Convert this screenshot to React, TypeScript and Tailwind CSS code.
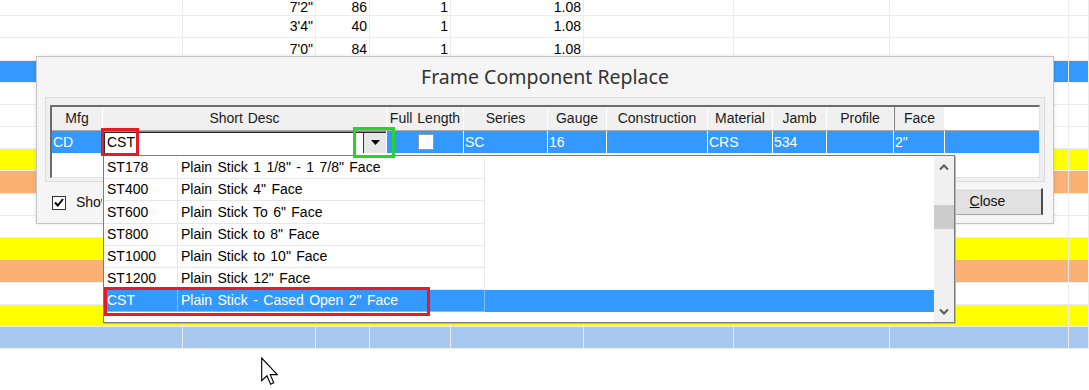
const sheetCols = ['w-[183px]', 'w-[133px]', 'w-[54px]', 'w-[81px]', 'w-[133px]', 'w-[150px]', 'w-[156px]', 'w-[179px]', 'w-[20px]'];

const rowBg: Record<string, string> = {
  white: 'bg-white',
  blue: 'bg-[#3399ff]',
  yellow: 'bg-[#ffff00]',
  orange: 'bg-[#fbb173]',
  light: 'bg-[#a8c9ef]',
};

const sheetRows = [
  { h: 'h-[22px]', bg: 'white', vals: ["3'4\"", '40', '1', '1.08'] },
  { h: 'h-[23px]', bg: 'white', vals: ["7'0\"", '84', '1', '1.08'] },
  { h: 'h-[22px]', bg: 'blue' },
  { h: 'h-[22px]', bg: 'white' },
  { h: 'h-[22px]', bg: 'white' },
  { h: 'h-[22px]', bg: 'white' },
  { h: 'h-[22px]', bg: 'yellow' },
  { h: 'h-[23px]', bg: 'orange' },
  { h: 'h-[22px]', bg: 'white' },
  { h: 'h-[22px]', bg: 'white' },
  { h: 'h-[22px]', bg: 'yellow' },
  { h: 'h-[23px]', bg: 'orange' },
  { h: 'h-[22px]', bg: 'white' },
  { h: 'h-[22px]', bg: 'yellow' },
  { h: 'h-[22px]', bg: 'light' },
];

const topVals = ['', "7'2\"", '86', '1', '1.08'];

const gridCols = [
  { label: 'Mfg', w: 'w-[51px]', val: 'CD' },
  { label: 'Short Desc', w: 'w-[284px]', val: '' },
  { label: 'Full Length', w: 'w-[77px]', val: '' },
  { label: 'Series', w: 'w-[84px]', val: 'SC' },
  { label: 'Gauge', w: 'w-[59px]', val: '16' },
  { label: 'Construction', w: 'w-[101px]', val: '' },
  { label: 'Material', w: 'w-[65px]', val: 'CRS' },
  { label: 'Jamb', w: 'w-[54px]', val: '534' },
  { label: 'Profile', w: 'w-[67px]', val: '' },
  { label: 'Face', w: 'w-[51px]', val: '2"' },
];

const items = [
  { code: 'ST178', desc: 'Plain Stick 1 1/8" - 1 7/8" Face', h: 'h-[22px]' },
  { code: 'ST400', desc: 'Plain Stick 4" Face', h: 'h-[22px]' },
  { code: 'ST600', desc: 'Plain Stick To 6" Face', h: 'h-[23px]' },
  { code: 'ST800', desc: 'Plain Stick to 8" Face', h: 'h-[22px]' },
  { code: 'ST1000', desc: 'Plain Stick to 10" Face', h: 'h-[22px]' },
  { code: 'ST1200', desc: 'Plain Stick 12" Face', h: 'h-[22px]' },
  { code: 'CST', desc: 'Plain Stick - Cased Open 2" Face', h: 'h-[22px]', selected: true },
];

function Chevron({ down }: { down?: boolean }) {
  return (
    <svg width="10" height="7" viewBox="0 0 10 7">
      <polyline points={down ? '1,1.5 5,5.5 9,1.5' : '1,5.5 5,1.5 9,5.5'} fill="none" stroke="#5a5a5a" strokeWidth="2" />
    </svg>
  );
}

function Sheet() {
  return (
    <div className="text-[14px] text-black">
      {/* first row is cut off by the top of the window */}
      <div className="flex h-[16px] border-b border-[#ececec] leading-[14px]">
        {sheetCols.map((w, i) => (
          <div key={i} className={`${w} shrink-0 border-r border-[#ececec] pr-[2px] text-right`}>
            {topVals[i] ?? ''}
          </div>
        ))}
      </div>
      {sheetRows.map((r, ri) => (
        <div key={ri} className={`flex ${r.h} border-b border-[#ececec] ${rowBg[r.bg]}`}>
          {sheetCols.map((w, i) => (
            <div key={i} className={`${w} flex shrink-0 items-center justify-end border-r border-[#ececec] pr-[2px]`}>
              {r.vals && i > 0 && i < 5 ? r.vals[i - 1] : ''}
            </div>
          ))}
        </div>
      ))}
    </div>
  );
}

function Dialog() {
  return (
    <div className="absolute left-[36px] top-[56px] flex h-[168px] w-[1018px] flex-col border border-[#c4c4c4] bg-[#f5f5f5] shadow-[0_0_4px_rgba(0,0,0,0.12)]">
      <div className="flex h-[40px] items-center justify-center font-['Noto_Sans',sans-serif] text-[19.5px] text-[#333]">
        Frame Component Replace
      </div>
      <div className="mx-[8px] border border-[#dcdcdc] bg-[#f0f0f0] pb-[3px] pl-[4px] pr-[4px] pt-[7px]">
        <div className="flex h-[73px] flex-col border-l-2 border-t-2 border-b border-r border-l-[#6b6b6b] border-t-[#6b6b6b] border-b-[#e2e2e2] border-r-[#e2e2e2] bg-white text-[14px]">
          <div className="flex h-[24px] shrink-0 border-b border-[#a9a9a9] [word-spacing:1px]">
            {gridCols.map((c) => (
              <div
                key={c.label}
                className={`${c.w} flex shrink-0 items-center justify-center border-r border-white bg-[#f0f0f0] text-[#1a1a1a] ${c.label === 'Face' ? 'border-l border-l-[#7a7a7a]' : ''}`}
              >
                {c.label}
              </div>
            ))}
          </div>
          <div className="flex h-[22px] shrink-0 bg-[#3399ff] text-white">
            {gridCols.map((c) => (
              <div key={c.label} className={`${c.w} flex shrink-0 items-center border-r border-white pl-[1px]`}>
                {c.label === 'Short Desc' ? (
                  <div className="flex h-[21px] w-full border-l border-t border-[#2a2a2a] bg-white text-black">
                    <div className="flex flex-1 items-center pl-[2px]">CST</div>
                    <div className="flex w-[23px] items-center justify-center border-l border-[#3a3a3a] bg-[#e6e6e6]">
                      <svg width="9" height="5" viewBox="0 0 9 5">
                        <polygon points="0,0 9,0 4.5,5" fill="#000" />
                      </svg>
                    </div>
                  </div>
                ) : c.label === 'Full Length' ? (
                  <div className="mx-auto h-[16px] w-[16px] border border-[#9a9a9a] bg-white" />
                ) : (
                  c.val
                )}
              </div>
            ))}
            <div className="flex-1" />
          </div>
          <div className="flex-1" />
        </div>
      </div>
      <div className="flex flex-1 items-start justify-between pl-[15px] pr-[10px] text-[14px]">
        <div className="mt-[10px] flex items-center gap-[10px]">
          <div className="flex h-[14px] w-[14px] items-center justify-center border border-[#333] bg-white">
            <svg width="10" height="9" viewBox="0 0 10 9">
              <polyline points="1,4.5 3.8,7.5 9,1" fill="none" stroke="#000" strokeWidth="2" />
            </svg>
          </div>
          {/* the rest of the label sits under the open list */}
          <span className="w-[26px] overflow-hidden whitespace-nowrap text-[#111]">Show</span>
        </div>
        <button className="mt-[6px] flex h-[27px] w-[110px] items-center justify-center border-b border-l border-r-2 border-t border-b-[#a6a6a6] border-l-white border-r-[#4d4d4d] border-t-white bg-[#e1e1e1] text-[#111]">
          <span className="underline">C</span>lose
        </button>
      </div>
    </div>
  );
}

function DropList() {
  return (
    <div className="absolute left-[103px] top-[155px] flex h-[168px] w-[852px] border border-[#7d7d7d] bg-white text-[14px] shadow-[1px_1px_0_#b5b5b5]">
      <div className="flex flex-1 flex-col pt-[1px]">
        {items.map((it) => (
          <div key={it.code} className={`flex ${it.h} ${it.selected ? 'bg-[#3399ff] text-white' : 'text-black'}`}>
            <div className={`flex w-[74px] shrink-0 items-center border-b border-r pl-[3px] ${it.selected ? 'border-[#7fbfff]' : 'border-[#e8e8e8]'}`}>
              {it.code}
            </div>
            <div className={`flex w-[307px] shrink-0 items-center border-b border-r pl-[3px] [word-spacing:1.5px] ${it.selected ? 'border-[#7fbfff]' : 'border-[#e8e8e8]'}`}>
              {it.desc}
            </div>
            <div className="flex-1" />
          </div>
        ))}
      </div>
      <div className="flex w-[20px] flex-col bg-[#f0f0f0]">
        <div className="flex h-[22px] items-center justify-center">
          <Chevron />
        </div>
        <div className="mt-[27px] h-[24px] bg-[#cdcdcd]" />
        <div className="flex-1" />
        <div className="flex h-[22px] items-center justify-center">
          <Chevron down />
        </div>
      </div>
    </div>
  );
}

export default function App() {
  return (
    <div className="relative h-[390px] w-[1089px] overflow-hidden bg-white font-['Liberation_Sans',Arial,sans-serif]">
      <Sheet />
      <Dialog />
      <DropList />
      {/* annotation boxes */}
      <div className="absolute left-[101px] top-[128px] h-[28px] w-[38px] border-[3px] border-[#e51c23]" />
      <div className="absolute left-[353px] top-[127px] h-[31px] w-[42px] border-[3px] border-[#27d427]" />
      <div className="absolute left-[104px] top-[287px] h-[29px] w-[326px] border-[3px] border-[#e51c23]" />
      <svg className="absolute left-[261px] top-[357px]" width="17" height="29" viewBox="0 0 12 20">
        <path d="M0.5,0.5 L0.5,16.5 L4.2,13 L6.8,19 L9,18 L6.5,12.2 L11.5,12.2 Z" fill="#fff" stroke="#000" strokeWidth="0.8" />
      </svg>
    </div>
  );
}
